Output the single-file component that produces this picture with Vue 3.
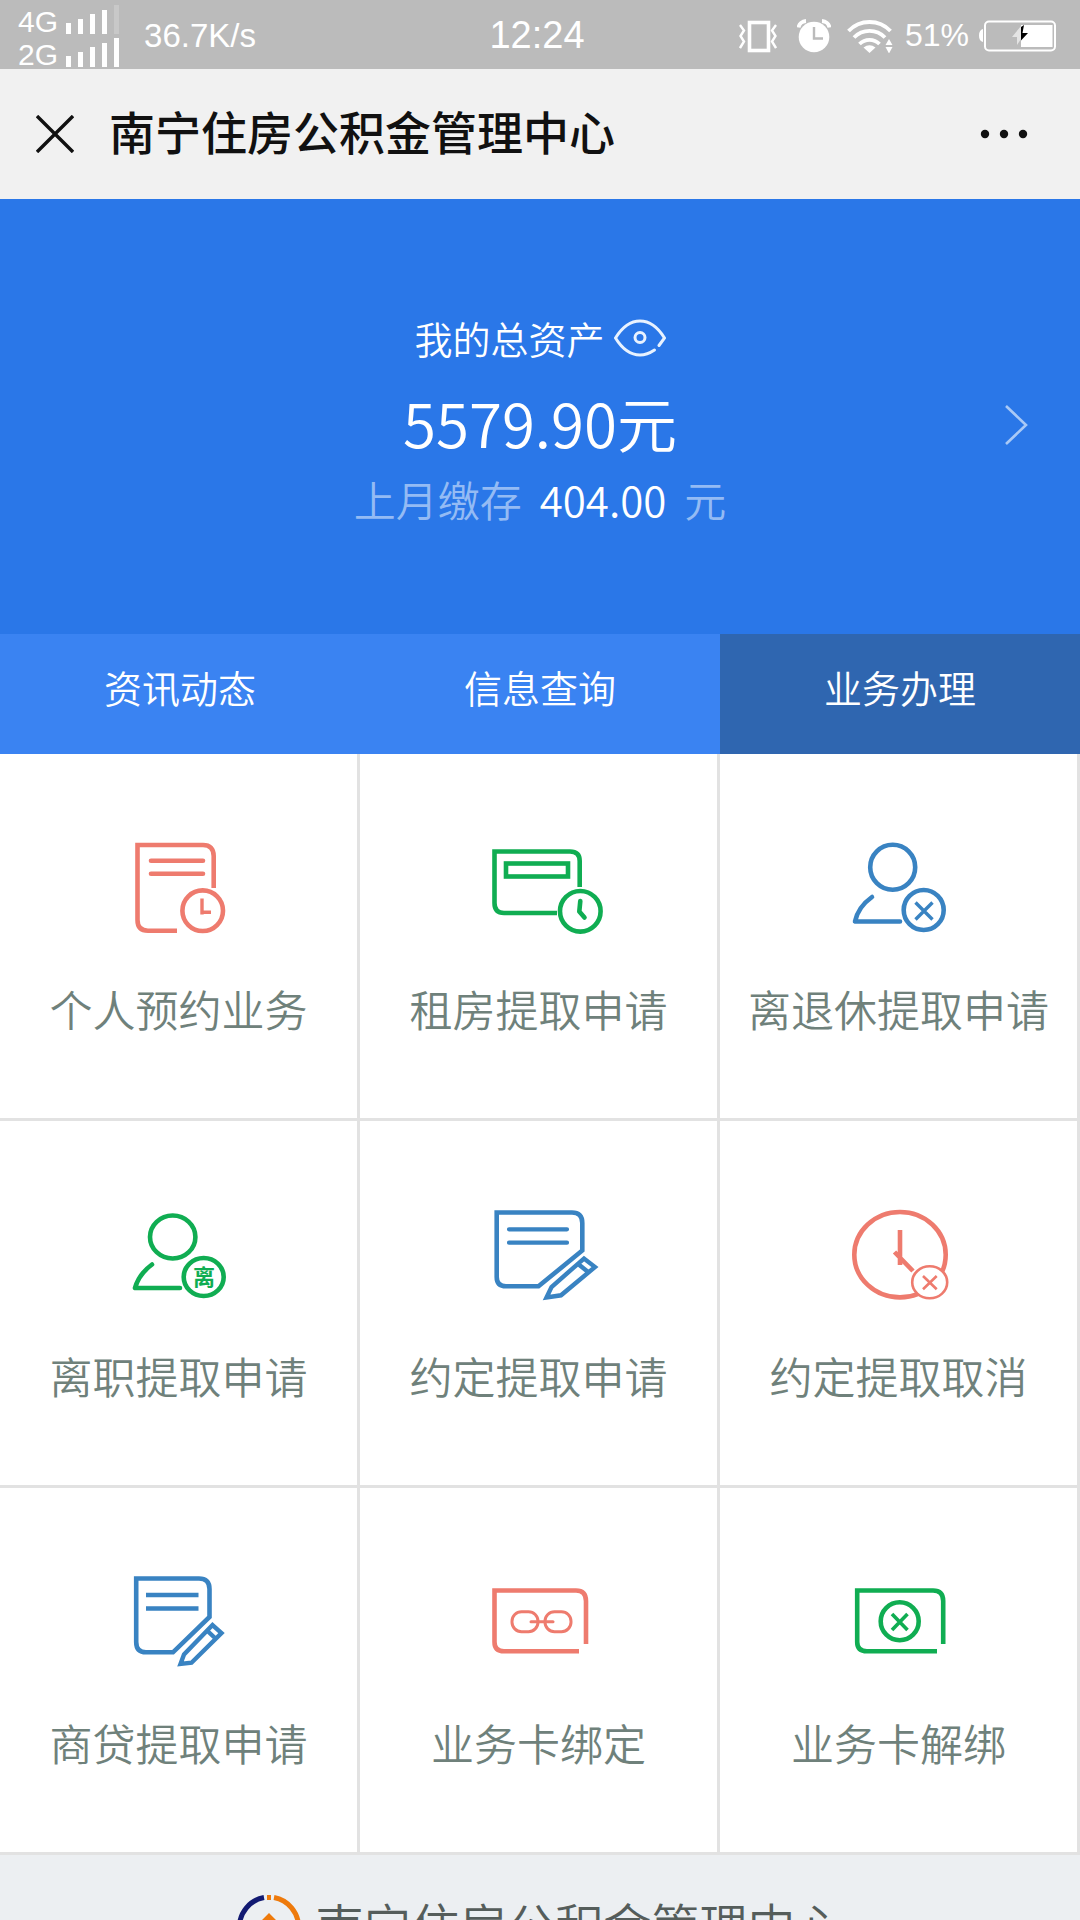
<script setup>
import { ref } from 'vue'

const tabs = ['资讯动态', '信息查询', '业务办理']
const activeTab = ref(2)
const amountVisible = ref(true)

const services = [
  { icon: 'appointment', label: '个人预约业务', color: '#ee7b6e' },
  { icon: 'rent', label: '租房提取申请', color: '#10ad52' },
  { icon: 'retire', label: '离退休提取申请', color: '#3983c2' },
  { icon: 'resign', label: '离职提取申请', color: '#10ad52' },
  { icon: 'agree', label: '约定提取申请', color: '#3983c2' },
  { icon: 'cancel', label: '约定提取取消', color: '#ee7b6e' },
  { icon: 'loan', label: '商贷提取申请', color: '#3983c2' },
  { icon: 'bind', label: '业务卡绑定', color: '#ee7b6e' },
  { icon: 'unbind', label: '业务卡解绑', color: '#10ad52' },
]

const barHeights = [11, 15, 20, 24, 29]
const signals = [
  { name: '4G', strength: 4 },
  { name: '2G', strength: 5 },
]
</script>

<template>
  <div class="app">
    <div class="status">
      <div class="status-left">
        <div class="signals">
          <div v-for="s in signals" :key="s.name" class="signal">
            <span>{{ s.name }}</span>
            <svg width="54" height="29" viewBox="0 0 54 29" fill="#fff" aria-hidden="true">
              <rect
                v-for="(h, i) in barHeights"
                :key="i"
                :x="i * 12"
                :y="29 - h"
                width="5"
                :height="h"
                :opacity="i < s.strength ? 1 : 0.2"
              />
            </svg>
          </div>
        </div>
        <span class="speed">36.7K/s</span>
      </div>
      <div class="clock">12:24</div>
      <div class="status-right">
        <svg class="vibrate" width="38" height="34" viewBox="0 0 38 34" fill="none" stroke="#fff" aria-hidden="true">
          <rect x="10.5" y="3.5" width="19" height="28" stroke-width="3.6" />
          <path d="M1 6 5 11.500 1.500 17 5 22.500 1 29M37 6 33 11.500 36.500 17 33 22.500 37 29" stroke-width="2.400" />
        </svg>
        <svg class="alarm" width="34" height="34" viewBox="0 0 34 34" fill="none" aria-hidden="true">
          <circle cx="17" cy="18" r="15.300" fill="#fff" />
          <path d="M1.500 8.500A8 8 0 0 1 9 2M32.500 8.500A8 8 0 0 0 25 2" stroke="#fff" stroke-width="4" />
          <path d="M17 8V19.500H26" stroke="#bbb" stroke-width="2.400" />
        </svg>
        <svg class="wifi" width="46" height="34" viewBox="0 0 46 34" fill="none" stroke="#fff" stroke-width="3.800" aria-hidden="true">
          <path d="M1.500 12A29 29 0 0 1 43.500 12" />
          <path d="M7 18.500A21.500 21.500 0 0 1 38 18.500" />
          <path d="M12.500 25A14 14 0 0 1 32.500 25" />
          <path d="M16.500 28.500Q22.500 24 28.500 28.500L22.500 34Z" fill="#fff" stroke="none" />
          <path d="M38.500 26 42 20 45.500 26ZM38.500 28 42 34.500 45.500 28Z" fill="#fff" stroke="none" />
        </svg>
        <span class="percent">51%</span>
        <svg class="battery" width="77" height="32" viewBox="0 0 77 32" aria-hidden="true">
          <path d="M4 9Q0 10 0 15.500T4 22Z" fill="#fff" />
          <rect x="6" y="1.500" width="70" height="29" rx="4" fill="none" stroke="#fff" stroke-width="2" />
          <rect x="42" y="5" width="31.500" height="22" fill="#fff" />
          <path d="M42 6 33 17H38L38 25 42 19Z" fill="#e4e4e4" />
          <path d="M42 7 45 5 43.500 13H49L42 20.500Z" fill="#000" />
        </svg>
      </div>
    </div>

    <header class="titlebar">
      <button class="icon-btn" type="button" aria-label="关闭">
        <svg width="38" height="38" viewBox="0 0 38 38" stroke="#111" stroke-width="3.400" fill="none" aria-hidden="true">
          <path d="M1 1 37 37M37 1 1 37" />
        </svg>
      </button>
      <h1>南宁住房公积金管理中心</h1>
      <button class="icon-btn" type="button" aria-label="更多">
        <svg width="48" height="10" viewBox="0 0 48 10" fill="#111" aria-hidden="true">
          <circle cx="5" cy="5" r="4.200" />
          <circle cx="24" cy="5" r="4.200" />
          <circle cx="43" cy="5" r="4.200" />
        </svg>
      </button>
    </header>

    <main class="content">
      <section class="hero">
        <div class="assets">
          <div class="assets-title">
            <span>我的总资产</span>
            <button class="icon-btn" type="button" aria-label="显示或隐藏金额" @click="amountVisible = !amountVisible">
              <svg width="52" height="38" viewBox="0 0 52 38" fill="none" stroke="#e8f2ff" stroke-width="3" stroke-linecap="round" aria-hidden="true">
                <path d="M45 26.500 50.500 19Q40 2 26 2T1.500 19Q12 36 26 36 33 36 40.500 31" />
                <circle cx="26" cy="18.500" r="5" />
              </svg>
            </button>
          </div>
          <div class="total">{{ amountVisible ? '5579.90' : '****' }}元</div>
          <div class="monthly">
            <span>上月缴存</span>
            <strong>{{ amountVisible ? '404.00' : '****' }}</strong>
            <span>元</span>
          </div>
        </div>
        <a class="detail" href="#detail" aria-label="查看详情">
          <svg width="24" height="42" viewBox="0 0 24 42" fill="none" stroke="#a9c9f6" stroke-width="2.600" aria-hidden="true">
            <path d="M2 2 22 21 2 40" />
          </svg>
        </a>
      </section>

      <nav class="tabs">
        <button
          v-for="(tab, i) in tabs"
          :key="tab"
          type="button"
          :class="{ active: i === activeTab }"
          @click="activeTab = i"
        >{{ tab }}</button>
      </nav>

      <section class="services">
        <a v-for="s in services" :key="s.icon" class="service" :href="'#' + s.icon">
          <svg
            width="121"
            height="94"
            viewBox="0 0 121 94"
            fill="none"
            :stroke="s.color"
            stroke-width="4.600"
            aria-hidden="true"
          >
            <g v-if="s.icon === 'appointment'">
              <path d="M95.700 47V15Q95.700 4 85 4H19.500V79Q19.500 89.700 30 89.700H59" />
              <path d="M33 19.700H85M33 32.700H85" stroke-linecap="round" />
              <circle cx="84.700" cy="69.700" r="20.300" />
              <path d="M84 57.500V73.500M84 71.300H93" stroke-width="3.400" />
            </g>
            <g v-else-if="s.icon === 'rent'">
              <path d="M101.700 46V20Q101.700 10.500 92 10.500H16.500V62Q16.500 72 26 72H79" />
              <rect x="28" y="22.500" width="62" height="13" />
              <circle cx="102.300" cy="70.300" r="20.300" />
              <path d="M102.300 60 101.300 70.500 106.500 76.500" stroke-linecap="round" stroke-linejoin="round" />
            </g>
            <g v-else-if="s.icon === 'retire'">
              <circle cx="54.700" cy="26.300" r="22.500" />
              <path d="M34 56Q20 66 17 80.500H62" stroke-linecap="round" stroke-linejoin="round" />
              <circle cx="85.700" cy="69" r="20" />
              <path d="M77.500 61.500 94.500 78.500M94.500 61.500 77.500 78.500" stroke-width="3.400" />
            </g>
            <g v-else-if="s.icon === 'resign'">
              <ellipse cx="54.700" cy="29" rx="22.700" ry="21.500" />
              <path d="M34 56.500Q21 66 17 80H62" stroke-linecap="round" stroke-linejoin="round" />
              <ellipse cx="85.700" cy="69" rx="20" ry="19" />
              <text x="86" y="77" text-anchor="middle" class="glyph" :fill="s.color" stroke="none">离</text>
            </g>
            <g v-else-if="s.icon === 'agree'">
              <path d="M104.300 42.500V15Q104.300 4.500 94 4.500H18.700V69Q18.700 78.300 28 78.300H60.500Z" />
              <path d="M31 21.300H89M31 34.700H89" stroke-width="4.200" stroke-linecap="round" />
              <path d="M68.500 89.500 73.500 79 106 50.500 117 59 83 87.300ZM99.500 55.500 111 64.700" stroke-width="4.400" />
            </g>
            <g v-else-if="s.icon === 'cancel'">
              <ellipse cx="62" cy="46.700" rx="45.700" ry="42.700" />
              <path d="M62 22V57M56.500 44 75 63" />
              <ellipse cx="91.700" cy="74.300" rx="17.500" ry="16" fill="#fff" stroke-width="2.600" />
              <path d="M85 68 98.700 81.300M98.700 68 85 81.300" stroke-width="2.600" />
            </g>
            <g v-else-if="s.icon === 'loan'">
              <path d="M91.500 42V14Q91.500 3.500 81 3.500H18.200V67Q18.200 77.300 28 77.300H55Z" />
              <path d="M28 20H80.500M28 33.500H80.500" />
              <path d="M62.500 89 66 79.500 94.500 50 103.500 58 73.500 87.700ZM88.500 55 98 64" stroke-width="4.400" />
            </g>
            <g v-else-if="s.icon === 'bind'">
              <path d="M108 69V26Q108 15.500 98 15.500H16.500V67Q16.500 76.300 26 76.300H101" />
              <rect x="34" y="36.700" width="26" height="20" rx="9.500" stroke-width="3" />
              <rect x="67" y="36.700" width="26" height="20" rx="9.500" stroke-width="3" />
              <path d="M53 46.700H75" stroke-width="3" stroke-linecap="round" />
            </g>
            <g v-else>
              <path d="M105.200 69V26Q105.200 15.500 95 15.500H19.200V67Q19.200 76.300 29 76.300H99" />
              <circle cx="61.700" cy="46.300" r="19" />
              <path d="M54 39 69.500 55M69.500 39 54 55" stroke-width="3.600" />
            </g>
          </svg>
          <span>{{ s.label }}</span>
        </a>
      </section>

      <footer class="footer">
        <svg width="66" height="66" viewBox="0 0 66 66" fill="none" aria-hidden="true">
          <path d="M28 3.500A30 30 0 0 0 28 62.500" stroke="#121a72" stroke-width="5" />
          <path d="M38 3.500A30 30 0 0 1 38 62.500" stroke="#ee7a0c" stroke-width="5" />
          <path d="M33 1V6" stroke="#ee7a0c" stroke-width="4" />
          <path d="M33 19 51 37H43V48H23V37H15Z" fill="#ee7a0c" />
        </svg>
        <span>南宁住房公积金管理中心</span>
      </footer>
    </main>
  </div>
</template>

<style>
body {
  margin: 0;
}
</style>

<style scoped>
.app {
  display: flex;
  flex-direction: column;
  height: 100vh;
  background: #eceff2;
  font-family: "Noto Sans CJK SC", sans-serif;
  font-weight: 350;
}

button {
  padding: 0;
  border: 0;
  background: none;
  font: inherit;
  cursor: pointer;
}

svg {
  display: block;
  flex: none;
}

.icon-btn {
  display: flex;
}

.status {
  display: grid;
  grid-template-columns: 1fr auto 1fr;
  align-items: center;
  flex: none;
  box-sizing: border-box;
  height: 69px;
  padding: 2px 24px 0 18px;
  background: #bbb;
  color: #fff;
  font-family: "Liberation Sans", sans-serif;
  font-weight: 400;
  font-size: 32px;
}

.status-left,
.status-right {
  display: flex;
  align-items: center;
}

.status-right {
  justify-content: flex-end;
}

.signals {
  display: flex;
  flex-direction: column;
  gap: 4px;
}

.signal {
  display: flex;
  align-items: flex-end;
  gap: 8px;
  height: 29px;
  font-size: 30px;
  line-height: 24px;
}

.speed {
  margin-left: 24px;
  font-size: 33px;
}

.clock {
  font-size: 38px;
}

.alarm {
  margin-left: 20px;
}

.wifi {
  margin-left: 16px;
}

.percent {
  margin-left: 12px;
}

.battery {
  margin-left: 10px;
}

.titlebar {
  display: flex;
  align-items: center;
  flex: none;
  height: 130px;
  padding: 0 52px 0 36px;
  background: #f1f1f1;
}

.titlebar h1 {
  flex: 1;
  margin: 0 0 8px 35px;
  color: #111;
  font-size: 46px;
  font-weight: 500;
  line-height: 60px;
}

.content {
  flex: 1;
  min-height: 0;
  overflow-y: auto;
  scrollbar-width: none;
}

.hero {
  display: grid;
  grid-template-columns: 1fr auto 1fr;
  align-items: center;
  padding: 100px 52px 83px;
  background: #2a77e8;
  color: #fff;
}

.assets {
  grid-column: 2;
  display: flex;
  flex-direction: column;
  align-items: center;
  padding-bottom: 20px;
}

.assets-title {
  display: flex;
  align-items: center;
  gap: 9px;
  font-size: 38px;
  line-height: 78px;
}

.total {
  font-size: 60px;
  line-height: 90px;
}

.monthly {
  display: flex;
  gap: 18px;
  color: #94bbf4;
  font-size: 42px;
  line-height: 64px;
}

.monthly strong {
  color: #fff;
  font-weight: 350;
}

.detail {
  justify-self: end;
}

.tabs {
  display: grid;
  grid-template-columns: repeat(3, 1fr);
  background: #3a83f2;
}

.tabs button {
  height: 120px;
  padding-bottom: 16px;
  color: #fff;
  font-size: 38px;
}

.tabs .active {
  background: #2f66b0;
}

.services {
  display: grid;
  grid-template-columns: repeat(3, 1fr);
  background: #fff;
}

.service {
  display: flex;
  flex-direction: column;
  align-items: center;
  gap: 41px;
  box-sizing: border-box;
  height: 367px;
  padding-top: 87px;
  border-right: 3px solid #e2e2e2;
  border-bottom: 3px solid #e2e2e2;
  color: #6f817b;
  font-size: 43px;
  line-height: 64px;
  text-decoration: none;
  white-space: nowrap;
}

.service svg {
  overflow: visible;
}

.glyph {
  font-size: 22px;
  font-weight: 700;
}

.footer {
  display: flex;
  justify-content: center;
  align-items: center;
  gap: 13px;
  padding: 36px 0;
  color: #555d5b;
  font-size: 48px;
  line-height: 64px;
}

.footer span {
  padding-bottom: 8px;
}
</style>
